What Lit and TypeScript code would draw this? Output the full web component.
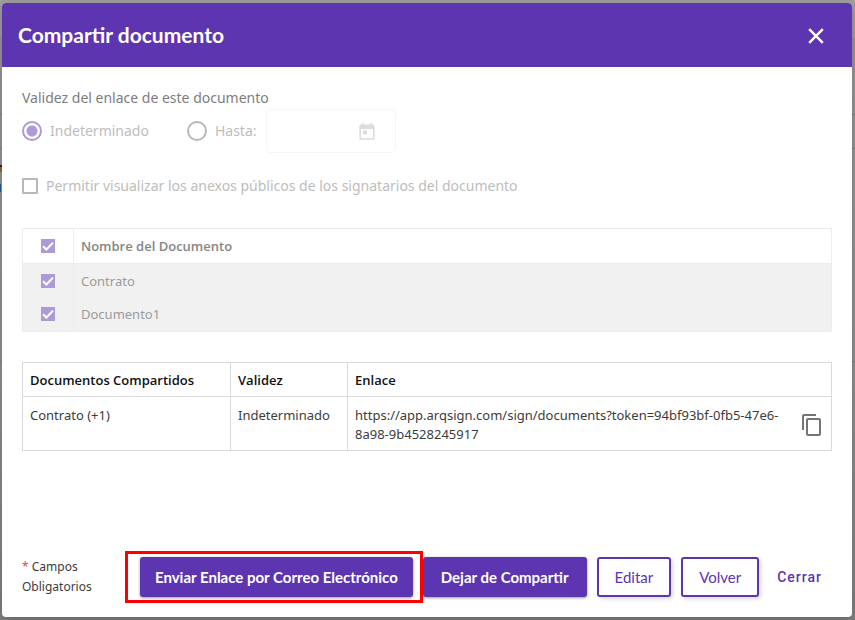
import { LitElement, html, css } from "lit";
import { customElement, state } from "lit/decorators.js";

interface SharedLink {
  documents: string;
  validity: string;
  url: string;
}

@customElement("app-root")
export class AppRoot extends LitElement {
  @state() private documents: string[] = ["Contrato", "Documento1"];
  @state() private links: SharedLink[] = [
    {
      documents: "Contrato (+1)",
      validity: "Indeterminado",
      url: "https://app.arqsign.com/sign/documents?token=94bf93bf-0fb5-47e6-8a98-9b4528245917",
    },
  ];

  static styles = css`
    :host {
      --brand: #5e35b1;
      --rule: linear-gradient(#7f7f7f, #7f7f7f);
      --check: url("data:image/svg+xml,%3Csvg xmlns='http://www.w3.org/2000/svg' viewBox='0 0 14 14'%3E%3Cpath d='M2 7.2l3.4 3.3L12 3.6' fill='none' stroke='white' stroke-width='2'/%3E%3C/svg%3E");
      box-sizing: border-box;
      display: flex;
      min-height: 100vh;
      padding: 3px 3px 3px 2px;
      background:
        linear-gradient(#2b2038 2px, #a06420 2px) 0 165px / 2px 7px no-repeat,
        linear-gradient(#1f5c9c, #1f5c9c) 0 184px / 1px 8px no-repeat,
        var(--rule) 0 114px / 100% 1px no-repeat,
        var(--rule) 0 148px / 100% 1px no-repeat,
        var(--rule) 0 361px / 100% 1px no-repeat,
        linear-gradient(#9e9e9e 37px, #969696 38px, #8f8f8f 60%, #808080);
      font-family: "Noto Sans", "Open Sans", sans-serif;
      font-size: 13px;
      line-height: 20px;
      color: #3c3c3c;
    }
    * {
      box-sizing: border-box;
    }
    button,
    input {
      margin: 0;
      font: inherit;
    }
    .dialog {
      display: flex;
      flex: 1;
      flex-direction: column;
      min-width: 0;
      border-radius: 4px;
      background: #fff;
      box-shadow: 0 4px 12px rgba(0, 0, 0, 0.2);
    }
    .header {
      display: flex;
      align-items: center;
      justify-content: space-between;
      height: 64px;
      padding: 0 24px 0 16px;
      border-radius: 4px 4px 0 0;
      background: var(--brand);
      color: #fff;
    }
    .title {
      margin: 0;
      font-family: Lato, sans-serif;
      font-size: 21px;
      font-weight: 700;
      line-height: 28px;
    }
    .close {
      display: flex;
      padding: 0;
      border: 0;
      background: none;
      color: inherit;
    }
    .body {
      display: flex;
      flex: 1;
      flex-direction: column;
      padding: 20px;
    }
    .validity {
      margin: 0;
      padding: 0;
      border: 0;
      min-width: 0;
      font-size: 14px;
    }
    .legend {
      padding: 0;
      line-height: 22px;
      color: #7d7d7d;
    }
    .options {
      display: flex;
      align-items: center;
      height: 44px;
      color: #bdbdbd;
    }
    .option {
      display: flex;
      align-items: center;
      gap: 8px;
    }
    .until {
      margin-left: 38px;
    }
    .radio {
      appearance: none;
      width: 20px;
      height: 20px;
      border: 2px solid #b8b8b8;
      border-radius: 50%;
    }
    .radio:checked {
      border-color: #af9ad8;
      background: radial-gradient(#af9ad8 5px, transparent 6px);
    }
    .date {
      display: flex;
      align-items: center;
      width: 130px;
      height: 44px;
      margin-left: 9px;
      padding: 0 20px 0 12px;
      border: 1px solid #f5f5f5;
      border-radius: 5px;
    }
    .date-input {
      flex: 1;
      min-width: 0;
      padding: 0;
      border: 0;
      background: none;
    }
    .annexes {
      margin-top: 23px;
      font-size: 14px;
      color: #bdbdbd;
    }
    .box {
      appearance: none;
      width: 16px;
      height: 16px;
      border: 2px solid #b8b8b8;
      border-radius: 1px;
    }
    .tick {
      appearance: none;
      display: block;
      width: 14px;
      height: 14px;
      margin: 0 auto;
      background: #af9ad8 var(--check);
    }
    .table {
      width: 100%;
      border-collapse: collapse;
      table-layout: fixed;
    }
    .table th,
    .table td {
      height: 34px;
      padding: 0 7px;
      border: 1px solid #dadada;
      text-align: left;
    }
    .table th {
      font-family: "Open Sans", sans-serif;
      font-weight: 600;
    }
    .picker {
      margin-top: 32px;
      color: #9b9b9b;
    }
    .picker th,
    .picker td {
      border-color: #ededed;
    }
    .picker th {
      height: 35px;
      color: #858585;
    }
    .picker td {
      border-block: 0;
      background: #f1f1f1;
    }
    .picker tbody {
      border-bottom: 1px solid #ededed;
    }
    .col-check {
      width: 51px;
    }
    .shared {
      margin-top: 30px;
    }
    .shared th {
      color: #111;
    }
    .shared td {
      height: 54px;
      padding-block: 9px 6px;
      vertical-align: top;
      line-height: 19px;
    }
    .col-docs {
      width: 208px;
    }
    .col-validity {
      width: 117px;
    }
    .link {
      display: flex;
      align-items: center;
      justify-content: space-between;
      gap: 8px;
    }
    .copy {
      display: flex;
      padding: 0;
      border: 0;
      background: none;
      color: #757575;
    }
    .footer {
      display: flex;
      align-items: center;
      gap: 10px;
      padding: 0 22px 20px 20px;
    }
    .required {
      flex: 1;
      min-width: 0;
      margin: 0;
      font-size: 12px;
    }
    .star {
      color: #f44336;
    }
    .highlight {
      position: relative;
    }
    .highlight::after {
      content: "";
      position: absolute;
      inset: -6px -10px -6px -15px;
      border: 3px solid #f00;
      pointer-events: none;
    }
    .button {
      height: 40px;
      padding: 0 18px;
      border: 0;
      border-radius: 3px;
      font-family: Lato, sans-serif;
      font-size: 15px;
      white-space: nowrap;
    }
    .filled {
      background: var(--brand);
      color: #fff;
      font-weight: 700;
      box-shadow: 0 1px 3px rgba(0, 0, 0, 0.4);
    }
    .highlight .button {
      padding: 0 15px;
    }
    .outlined {
      padding: 0 16px;
      border: 2px solid var(--brand);
      background: #fff;
      color: var(--brand);
      box-shadow: 2px 2px 4px rgba(0, 0, 0, 0.15);
    }
    .plain {
      padding: 0 8px;
      background: none;
      color: var(--brand);
      font-family: Roboto, sans-serif;
      font-size: 14px;
      font-weight: 500;
      letter-spacing: 1px;
    }
  `;

  render() {
    return html`
      <section class="dialog" role="dialog" aria-labelledby="title">
        <header class="header">
          <h1 class="title" id="title">Compartir documento</h1>
          <button class="close" aria-label="Cerrar">
            <svg width="24" height="24" viewBox="0 0 24 24" fill="none" stroke="currentColor" stroke-width="2.4">
              <path d="M5.2 6.200l13.600 13.600M18.800 6.200L5.200 19.800" />
            </svg>
          </button>
        </header>

        <div class="body">
          <fieldset class="validity">
            <legend class="legend">Validez del enlace de este documento</legend>
            <div class="options">
              <label class="option">
                <input class="radio" type="radio" name="validity" checked disabled />
                Indeterminado
              </label>
              <label class="option until">
                <input class="radio" type="radio" name="validity" disabled />
                Hasta:
              </label>
              <div class="date">
                <input class="date-input" type="text" aria-label="Fecha de validez" disabled />
                <svg width="16" height="18" viewBox="0 0 16 18" fill="#dcdcdc">
                  <path fill-rule="evenodd" d="M3 1h1.600v1.600h6.800V1H13v1.600h1a1.600 1.600 0 0 1 1.600 1.600v12a1.600 1.600 0 0 1-1.600 1.600H2A1.600 1.600 0 0 1 .4 16.200V4.200A1.600 1.600 0 0 1 2 2.600h1zM2 7v9.200h12V7zM4 8.600h4v4H4z" />
                </svg>
              </div>
            </div>
          </fieldset>

          <label class="option annexes">
            <input class="box" type="checkbox" disabled />
            Permitir visualizar los anexos públicos de los signatarios del documento
          </label>

          <table class="table picker">
            <colgroup><col class="col-check" /><col /></colgroup>
            <thead>
              <tr>
                <th><input class="tick" type="checkbox" aria-label="Seleccionar todos" checked disabled /></th>
                <th>Nombre del Documento</th>
              </tr>
            </thead>
            <tbody>
              ${this.documents.map(
                (name, i) => html`
                  <tr>
                    <td><input class="tick" id="doc-${i}" type="checkbox" checked disabled /></td>
                    <td><label for="doc-${i}">${name}</label></td>
                  </tr>
                `
              )}
            </tbody>
          </table>

          <table class="table shared">
            <colgroup><col class="col-docs" /><col class="col-validity" /><col /></colgroup>
            <thead>
              <tr><th>Documentos Compartidos</th><th>Validez</th><th>Enlace</th></tr>
            </thead>
            <tbody>
              ${this.links.map(
                (link) => html`
                  <tr>
                    <td>${link.documents}</td>
                    <td>${link.validity}</td>
                    <td>
                      <div class="link">
                        <span>${link.url}</span>
                        <button class="copy" aria-label="Copiar enlace">
                          <svg width="24" height="24" viewBox="0 0 24 24" fill="currentColor">
                            <path d="M16 1H4c-1.100 0-2 .9-2 2v14h2V3h12V1zm3 4H8c-1.100 0-2 .9-2 2v14c0 1.100.9 2 2 2h11c1.100 0 2-.9 2-2V7c0-1.100-.9-2-2-2zm0 16H8V7h11v14z" />
                          </svg>
                        </button>
                      </div>
                    </td>
                  </tr>
                `
              )}
            </tbody>
          </table>
        </div>

        <footer class="footer">
          <p class="required"><span class="star">*</span> Campos Obligatorios</p>
          <div class="highlight">
            <button class="button filled">Enviar Enlace por Correo Electrónico</button>
          </div>
          <button class="button filled">Dejar de Compartir</button>
          <button class="button outlined">Editar</button>
          <button class="button outlined">Volver</button>
          <button class="button plain">Cerrar</button>
        </footer>
      </section>
    `;
  }
}
